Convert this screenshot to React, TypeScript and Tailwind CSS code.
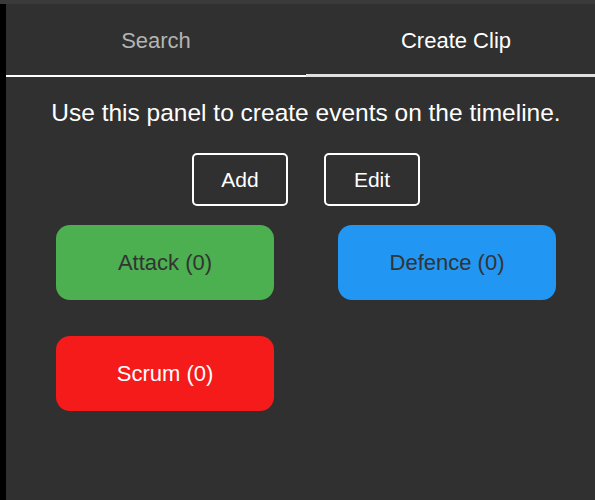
import React from "react";

export default function App() {
  const font = { fontFamily: '"Liberation Sans", Arial, sans-serif' };
  return (
    <div className="w-[595px] h-[500px] overflow-hidden bg-[#3a3a3a] flex flex-col" style={font}>
      <div className="h-[4px] shrink-0 bg-[#3a3a3a]" />
      <div className="flex flex-1 min-h-0">
        <div className="w-[6px] shrink-0 bg-black" />
        <div className="w-[600px] shrink-0 bg-[#303030] flex flex-col">
          <div className="flex h-[73px] shrink-0">
            <div className="w-[300px] flex items-center justify-center pt-[2px] border-b-2 border-white text-[22px] text-[#b4b4b4]">
              Search
            </div>
            <div className="w-[300px] flex items-center justify-center pt-[2px] border-b-[3px] border-[#e0e0e0] text-[22px] text-white">
              Create Clip
            </div>
          </div>
          <p className="mt-[22px] text-center text-[24.5px] leading-[28px] text-white">
            Use this panel to create events on the timeline.
          </p>
          <div className="mt-[26px] flex justify-center gap-[36px]">
            <button className="w-[96px] h-[53px] rounded-[5px] border-2 border-white text-[21px] text-white bg-transparent">
              Add
            </button>
            <button className="w-[96px] h-[53px] rounded-[5px] border-2 border-white text-[21px] text-white bg-transparent">
              Edit
            </button>
          </div>
          <div className="mt-[19px] pl-[50px] grid grid-cols-[218px_218px] gap-x-[64px] gap-y-[36px]">
            <button className="h-[75px] rounded-[14px] bg-[#4caf50] text-[22px] text-[#333333]">
              Attack (0)
            </button>
            <button className="h-[75px] rounded-[14px] bg-[#2196f3] text-[22px] text-[#333333]">
              Defence (0)
            </button>
            <button className="h-[75px] rounded-[14px] bg-[#f51b1b] text-[22px] text-white">
              Scrum (0)
            </button>
          </div>
        </div>
      </div>
    </div>
  );
}
